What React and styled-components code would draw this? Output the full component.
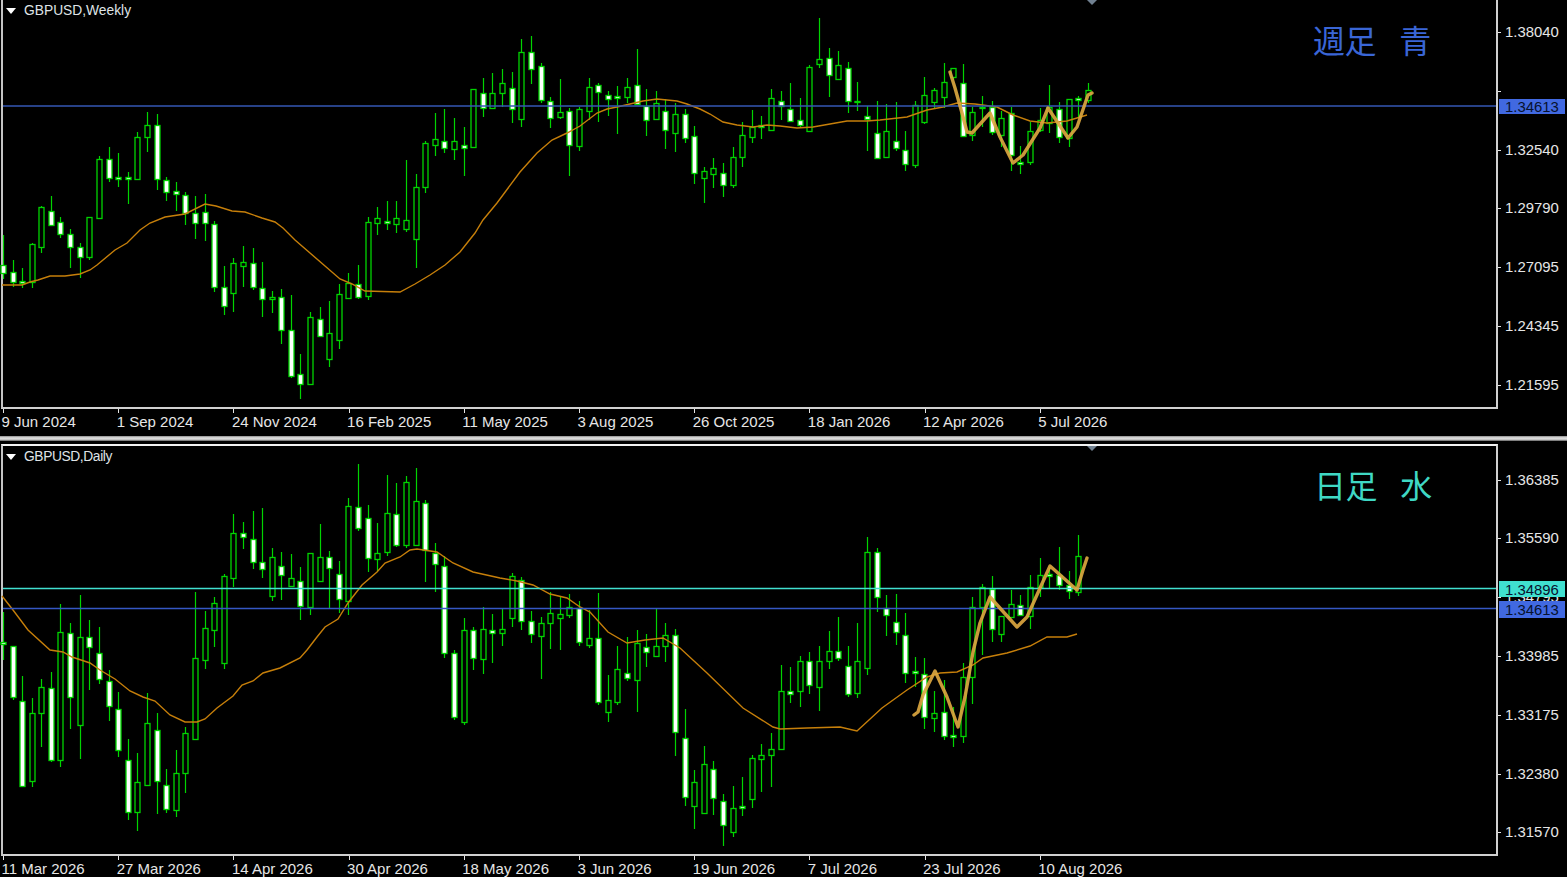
import styled, { createGlobalStyle } from "styled-components";

const STEP = 9.6;
const START = 2.9;
const FONT = '"Liberation Sans", Arial, sans-serif';

// [high, low, bodyTop, bodyBottom, bear] in page pixels, one per bar
const weeklyBars = [
  [235,279,265,273,1],[260,287,272,282,1],[268,288,281,283,1],[243,288,244,282,0],[206,253,207,247,0],
  [196,225,211,225,1],[217,238,222,234,1],[229,268,234,247,1],[243,278,247,257,1],[217,260,217,257,0],
  [156,218,159,218,0],[147,182,159,178,1],[153,187,177,179,1],[172,204,177,179,1],[132,179,137,179,0],
  [112,152,125,137,0],[114,190,125,179,1],[177,201,180,192,1],[182,211,191,194,1],[192,225,195,213,1],
  [196,239,213,223,1],[194,241,212,223,1],[221,292,224,287,1],[266,315,287,306,1],[258,312,263,293,0],
  [246,287,262,266,0],[248,290,263,287,1],[262,317,288,299,1],[291,313,297,299,0],[289,344,297,330,1],
  [295,378,330,376,1],[354,399,374,384,1],[312,385,317,384,0],[307,337,319,336,1],[301,367,333,359,0],
  [284,349,294,340,0],[273,299,283,298,0],[265,299,284,297,1],[217,300,222,296,0],[207,235,218,223,0],
  [201,230,221,223,1],[201,233,218,224,0],[160,232,220,229,0],[174,268,187,239,0],[141,193,143,187,0],
  [113,156,139,145,0],[109,153,141,148,1],[118,160,141,149,0],[127,176,145,148,1],[89,147,89,147,0],
  [78,117,93,108,1],[73,108,93,108,0],[69,107,83,93,0],[72,123,88,109,1],[39,127,52,119,0],
  [36,84,52,69,1],[63,103,66,100,1],[97,128,101,118,1],[79,119,112,117,0],[108,176,111,145,1],
  [107,151,109,146,0],[78,120,87,111,0],[83,122,85,92,1],[91,116,95,99,1],[86,134,96,98,1],
  [78,103,87,97,0],[49,105,85,104,1],[89,136,106,120,1],[91,120,103,119,0],[99,149,111,130,1],
  [103,152,114,133,0],[109,143,114,138,1],[126,184,136,173,1],[167,203,171,178,0],[158,188,168,174,0],
  [163,197,173,185,1],[147,188,157,185,0],[122,167,135,157,0],[110,143,127,137,0],[116,139,125,127,1],
  [89,130,98,130,0],[91,120,101,106,1],[83,122,109,121,1],[98,128,120,125,1],[65,132,67,131,0],
  [18,68,59,64,0],[48,97,58,75,1],[51,79,65,79,0],[62,113,68,101,1],[82,111,101,102,1],
  [106,151,116,119,1],[101,159,133,158,1],[104,157,131,157,0],[102,151,141,148,1],[131,171,150,164,1],
  [101,168,105,165,0],[77,124,95,122,0],[88,109,90,102,0],[63,108,82,97,0],[68,80,68,77,0],
  [64,137,83,136,1],[107,141,112,135,0],[96,127,107,108,1],[101,135,107,132,1],[111,147,118,135,0],
  [107,171,113,155,1],[146,174,162,164,1],[122,165,131,162,0],[108,132,120,130,0],[85,133,107,123,0],
  [102,143,109,137,1],[99,147,99,138,0],[96,117,98,100,1],[83,103,90,100,0],
];

const dailyBars = [
  [612,660,642,644,1],[646,700,646,697,1],[676,787,701,786,1],[698,787,713,781,0],[679,747,687,713,0],
  [672,762,688,760,1],[604,767,632,760,0],[623,729,633,697,1],[595,759,637,725,0],[620,690,637,647,1],
  [627,684,653,679,1],[670,721,681,706,1],[692,757,709,750,1],[739,820,760,812,1],[753,831,782,812,0],
  [693,786,723,785,0],[713,814,730,781,1],[769,813,785,809,1],[750,817,773,810,0],[727,793,733,773,0],
  [592,740,658,739,0],[611,669,628,660,0],[597,647,603,630,0],[574,669,576,663,0],[514,587,533,578,0],
  [522,549,533,537,1],[511,569,539,562,1],[508,578,562,569,1],[548,601,557,596,0],[552,600,566,575,1],
  [554,587,578,586,0],[567,620,581,606,1],[553,615,553,607,0],[524,581,557,581,0],[551,608,557,568,1],
  [561,613,574,599,1],[498,615,506,601,0],[464,531,507,528,1],[505,572,518,558,1],[523,571,553,559,0],
  [475,556,513,552,0],[483,547,514,545,1],[476,548,482,545,0],[468,545,501,545,0],[500,582,503,550,1],
  [543,592,553,564,1],[556,658,566,653,1],[650,720,653,717,1],[618,725,630,722,0],[627,670,630,658,1],
  [607,674,629,659,0],[614,663,630,633,1],[609,646,629,633,0],[573,627,576,618,0],[577,630,580,621,1],
  [611,643,621,634,1],[617,679,623,636,0],[592,649,613,623,0],[597,650,614,618,0],[594,618,607,615,0],
  [601,646,608,642,1],[610,648,638,645,0],[593,705,638,702,1],[675,722,700,712,0],[646,705,669,702,0],
  [637,681,673,678,1],[630,712,643,680,0],[634,667,647,652,1],[609,656,646,656,0],[623,662,635,646,0],
  [629,756,635,732,1],[709,806,738,797,1],[770,829,782,806,0],[746,814,764,813,0],[761,815,769,798,1],
  [794,846,801,825,1],[786,837,808,832,0],[777,816,806,808,1],[755,808,758,799,0],[744,792,755,759,0],
  [733,787,749,755,0],[665,749,691,749,0],[667,703,691,694,1],[656,707,661,691,0],[652,694,661,685,1],
  [646,711,661,687,0],[631,669,651,661,0],[617,661,651,658,1],[646,697,666,694,1],[623,698,661,693,0],
  [537,675,552,668,0],[548,612,552,597,1],[595,636,608,615,1],[594,645,622,632,1],[613,683,635,673,1],
  [657,687,671,673,1],[658,729,674,717,1],[691,732,713,718,0],[680,740,712,736,1],[707,747,735,737,1],
  [663,743,677,736,0],[597,704,607,677,0],[584,655,587,607,0],[576,642,589,629,1],[616,642,616,634,0],
  [590,617,604,617,0],[595,615,605,615,1],[575,629,587,616,0],[558,597,575,587,0],[567,588,574,576,1],
  [547,590,575,585,1],[571,599,585,591,1],[535,596,556,592,0],
];

const weeklyMa = "2,285 22,285 30,282 38,280 50,276 65,276 80,274 90,270 97,265 115,250 127,243 140,230 150,223 165,217 185,214 205,204 216,206 232,211 245,212 262,218 275,222 283,228 295,240 310,253 325,266 340,279 352,284 365,291 400,292 415,284 430,275 445,265 460,252 475,233 483,220 497,203 520,172 537,153 552,140 567,133 580,126 597,113 607,109 617,107 630,104 643,101 657,99 677,101 687,104 700,109 710,114 723,122 737,125 753,127 767,125 780,126 797,128 813,127 830,124 847,121 867,121 880,120 907,117 927,110 943,107 957,103 975,104 997,107 1013,115 1030,121 1047,123 1067,121 1087,115";
const weeklyHand = "950,72 955,88 962,113 967,132 972,133 990,113 1000,137 1013,163 1023,155 1040,128 1048,108 1068,138 1077,127 1088,95 1092,93";

const dailyMa = "2,596 13,610 28,630 50,650 63,652 72,657 90,663 100,670 115,679 130,691 143,697 155,701 170,715 185,722 197,722 205,719 217,708 233,696 242,685 253,681 263,673 280,668 300,658 307,650 317,637 325,627 338,619 348,603 362,585 377,572 385,563 400,557 410,550 417,549 437,552 453,563 473,572 500,578 517,581 533,585 550,594 567,598 580,607 590,612 608,632 627,643 645,640 663,638 680,648 707,673 743,708 773,727 780,729 807,728 840,727 857,731 882,708 907,690 927,677 940,673 957,672 973,665 983,658 1007,653 1030,646 1047,637 1067,637 1077,634";
const dailyHand = "914,715 918,712 923,695 935,671 947,697 958,727 965,697 973,652 980,623 990,597 1017,627 1027,617 1050,566 1077,590 1083,570 1087,558";

const GlobalStyle = createGlobalStyle`
  html, body {
    margin: 0;
    background: #000;
    overflow: hidden;
  }
`;

const Page = styled.div`
  width: 1567px;
  height: 877px;
  background: #000;
  color: #e6e6e6;
  font-family: ${FONT};
  display: flex;
  flex-direction: column;
`;

const Panel = styled.section`
  flex: none;
  display: grid;
  grid-template-columns: 1498px 69px;
  grid-template-rows: ${(p) => p.$plotHeight}px ${(p) => p.$axisHeight}px;
`;

const Divider = styled.div`
  flex: none;
  height: 5px;
  margin-bottom: 3px;
  background: linear-gradient(#8c8c8c, #e4e4e4 40%, #c4c4c4 70%, #5c5c5c);
`;

const Plot = styled.div`
  position: relative;
  margin-left: 1px;
  border-left: 2px solid #c4c4c4;
  border-right: 2px solid #d0d0d0;
  border-bottom: 2px solid #d0d0d0;
  border-top: ${(p) => (p.$framed ? "2px solid #f2f2f2" : "none")};
`;

const ChartSvg = styled.svg`
  display: block;
  width: 100%;
  height: 100%;
  overflow: visible;
`;

const SymbolLabel = styled.div`
  position: absolute;
  top: ${(p) => p.$top}px;
  left: 3px;
  display: flex;
  align-items: center;
  gap: 8px;
  font-size: 13.8px;
  line-height: 16px;
  letter-spacing: ${(p) => p.$tracking}px;
  color: #dfe3e6;

  &::before {
    content: "";
    width: 0;
    height: 0;
    border-left: 5.5px solid transparent;
    border-right: 5.5px solid transparent;
    border-top: 6px solid #fff;
  }
`;

const Caption = styled.div`
  position: absolute;
  top: ${(p) => p.$top}px;
  left: ${(p) => p.$left}px;
  font-family: "Noto Sans CJK JP", ${FONT};
  font-weight: 400;
  font-size: 32px;
  line-height: 40px;
  letter-spacing: -0.5px;
  word-spacing: 5px;
  white-space: pre;
  color: ${(p) => p.$color};
`;

const TimeAxis = styled.div`
  display: flex;
  padding-left: 3px;
`;

const TimeCell = styled.div`
  position: relative;
  flex: 0 0 115.2px;
  white-space: nowrap;
  font-size: 15px;
  line-height: 17px;
  padding-top: 4px;
  text-indent: -1.5px;

  &::before {
    content: "";
    position: absolute;
    top: 0;
    left: 0;
    width: 1px;
    height: 4px;
    background: #e6e6e6;
  }
`;

const PriceAxis = styled.div`
  position: relative;
  grid-row: 1 / 3;
  grid-column: 2;
  padding-top: ${(p) => p.$offset}px;
  display: grid;
  grid-auto-rows: 58.83px;
`;

const PriceRow = styled.div`
  position: relative;
  padding-left: 7px;
  height: 17px;
  font-size: 14.9px;
  line-height: 17px;

  &::before {
    content: "";
    position: absolute;
    top: 8px;
    left: 0;
    width: 3px;
    height: 1px;
    background: #e6e6e6;
  }
`;

const PriceTag = styled.div`
  position: absolute;
  top: ${(p) => p.$top}px;
  left: 1px;
  width: 66px;
  height: ${(p) => p.$height}px;
  padding-left: 6px;
  box-sizing: border-box;
  font-size: 14.9px;
  line-height: ${(p) => p.$height + 2}px;
  color: #07122e;
  background: ${(p) => p.$color};
`;

function Candles({ bars }) {
  return bars.map(([high, low, top, bottom, bear], i) => {
    const x = Math.round(START + STEP * i) + 0.5;
    return (
      <g key={i}>
        <line x1={x} x2={x} y1={high} y2={low} stroke="#00d400" strokeWidth="1.2" />
        <rect
          x={x - 2.5}
          y={top + 0.5}
          width="5"
          height={Math.max(bottom - top, 1)}
          fill={bear ? "#fff" : "#000"}
          stroke="#00d400"
          strokeWidth="1.3"
        />
      </g>
    );
  });
}

function ChartPanel({ symbol, tracking, caption, captionColor, captionLeft, captionTop, bars, ma, hand, levels, viewTop, plotHeight, axisHeight, labelTop, marker, framed, dates, prices, priceOffset, tags, priceTop }) {
  return (
    <Panel $plotHeight={plotHeight} $axisHeight={axisHeight}>
      <Plot $framed={framed}>
        <ChartSvg viewBox={`3 ${viewTop} 1493 ${plotHeight - (framed ? 4 : 2)}`} preserveAspectRatio="none">
          <Candles bars={bars} />
          <polyline points={ma} fill="none" stroke="#c67f0a" strokeWidth="1.4" />
          {levels.map((l) => (
            <line key={l.y} x1="3" x2="1496" y1={l.y} y2={l.y} stroke={l.color} strokeWidth="1.3" />
          ))}
          <polyline
            points={hand}
            fill="none"
            stroke="#dba63f"
            strokeWidth="3.4"
            strokeLinejoin="round"
            strokeLinecap="round"
            opacity="0.92"
          />
          <polygon points={`1087,${marker} 1097,${marker} 1092,${marker + 5}`} fill="#708090" />
        </ChartSvg>
        <SymbolLabel $top={labelTop} $tracking={tracking}>{symbol}</SymbolLabel>
        <Caption $top={captionTop} $left={captionLeft} $color={captionColor}>
          {caption}
        </Caption>
      </Plot>
      <TimeAxis>
        {dates.map((d) => (
          <TimeCell key={d}>{d}</TimeCell>
        ))}
      </TimeAxis>
      <PriceAxis $offset={priceOffset}>
        {prices.map((p, i) => (
          <PriceRow key={i}>{p}</PriceRow>
        ))}
        {tags.map((t) => (
          <PriceTag key={t.label} $top={t.top - priceTop} $height={t.height} $color={t.color}>
            {t.label}
          </PriceTag>
        ))}
      </PriceAxis>
    </Panel>
  );
}

export default function App() {
  return (
    <Page>
      <GlobalStyle />
      <ChartPanel
        symbol="GBPUSD,Weekly"
        tracking={0}
        caption="週足  青"
        captionColor="#3a66d6"
        captionLeft={1310}
        captionTop={19}
        bars={weeklyBars}
        ma={weeklyMa}
        hand={weeklyHand}
        levels={[{ y: 106, color: "#3557b4" }]}
        viewTop={0}
        plotHeight={409}
        axisHeight={27}
        labelTop={3}
        marker={0}
        dates={["9 Jun 2024", "1 Sep 2024", "24 Nov 2024", "16 Feb 2025", "11 May 2025", "3 Aug 2025", "26 Oct 2025", "18 Jan 2026", "12 Apr 2026", "5 Jul 2026"]}
        prices={["1.38040", "", "1.32540", "1.29790", "1.27095", "1.24345", "1.21595"]}
        priceOffset={24}
        tags={[{ label: "1.34613", top: 99, height: 15, color: "#4169e1" }]}
        priceTop={0}
      />
      <Divider />
      <ChartPanel
        framed
        symbol="GBPUSD,Daily"
        tracking={-0.4}
        caption="日足  水"
        captionColor="#3fd8c4"
        captionLeft={1311}
        captionTop={18}
        bars={dailyBars}
        ma={dailyMa}
        hand={dailyHand}
        levels={[
          { y: 588.5, color: "#40e0d0" },
          { y: 608.5, color: "#3557c4" },
        ]}
        viewTop={446}
        plotHeight={412}
        axisHeight={21}
        labelTop={3}
        marker={446}
        dates={["11 Mar 2026", "27 Mar 2026", "14 Apr 2026", "30 Apr 2026", "18 May 2026", "3 Jun 2026", "19 Jun 2026", "7 Jul 2026", "23 Jul 2026", "10 Aug 2026"]}
        prices={["1.36385", "1.35590", "1.34795", "1.33985", "1.33175", "1.32380", "1.31570"]}
        priceOffset={27.5}
        tags={[
          { label: "1.34896", top: 581, height: 16, color: "#40e0d0" },
          { label: "1.34613", top: 601, height: 17, color: "#4169e1" },
        ]}
        priceTop={444}
      />
    </Page>
  );
}
